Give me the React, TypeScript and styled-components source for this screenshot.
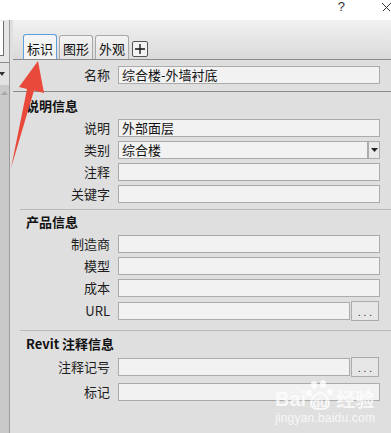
import styled, { createGlobalStyle } from "styled-components";

const GlobalStyle = createGlobalStyle`
  html, body {
    margin: 0;
    padding: 0;
  }
  body {
    width: 391px;
    height: 433px;
    overflow: hidden;
    background: #dfdfdf;
    font-family: "Noto Sans CJK SC", "Noto Sans", sans-serif;
    font-size: 13px;
    color: #1b1b1b;
  }
`;

type Addon = "dropdown" | "browse" | undefined;

interface FieldProps {
  label: string;
  value?: string;
  addon?: Addon;
}

const Field = ({ label, value, addon }: FieldProps) => (
  <StRow $tall={addon === "browse"}>
    <StLabel>{label}</StLabel>
    <StControl>
      <StInput>{value}</StInput>
      {addon === "dropdown" && (
        <StDropButton>
          <svg width="7" height="4" viewBox="0 0 7 4">
            <path d="M0 0h7L3.5 4z" fill="#222" />
          </svg>
        </StDropButton>
      )}
      {addon === "browse" && <StBrowseButton>. . .</StBrowseButton>}
    </StControl>
  </StRow>
);

const App = () => {
  return (
    <StPage>
      <GlobalStyle />
      <StTitleBar>
        <StHelp>?</StHelp>
        <StClose>
          <svg width="12" height="12" viewBox="0 0 12 12">
            <path d="M1 -1L12 10M12 -1L1 10" stroke="#333" strokeWidth="1" fill="none" />
          </svg>
        </StClose>
      </StTitleBar>
      <StBody>
        <StLeftStrip>
          <StStripTop>
            <StStripField />
          </StStripTop>
          <StStripDrop>
            <svg width="6" height="4" viewBox="0 0 6 4">
              <path d="M0 0h6L3 4z" fill="#333" />
            </svg>
          </StStripDrop>
          <StStripScroll>
            <svg width="7" height="4" viewBox="0 0 7 4">
              <path d="M3.5 0L7 4H0z" fill="#a8a8a8" />
            </svg>
          </StStripScroll>
        </StLeftStrip>
        <StMain>
          <StTabBar>
            <StTab $active>标识</StTab>
            <StTab>图形</StTab>
            <StTab>外观</StTab>
            <StAddTab>
              <svg width="10" height="10" viewBox="0 0 10 10">
                <path d="M5 0v10M0 5h10" stroke="#111" strokeWidth="1.3" />
              </svg>
            </StAddTab>
          </StTabBar>

          <StNameBlock>
            <Field label="名称" value="综合楼-外墙衬底" />
          </StNameBlock>
          <StDivider $dark />

          <StSection $top={4} $gap={4}>
            <StHeading>说明信息</StHeading>
            <Field label="说明" value="外部面层" />
            <Field label="类别" value="综合楼" addon="dropdown" />
            <Field label="注释" />
            <Field label="关键字" />
          </StSection>
          <StDivider $top={6} />

          <StSection $top={2} $gap={4}>
            <StHeading>产品信息</StHeading>
            <Field label="制造商" />
            <Field label="模型" />
            <Field label="成本" />
            <Field label="URL" addon="browse" />
          </StSection>
          <StDivider $top={9} />

          <StSection $top={3} $gap={6}>
            <StHeading>Revit 注释信息</StHeading>
            <Field label="注释记号" addon="browse" />
            <Field label="标记" />
          </StSection>
        </StMain>
      </StBody>

      <StArrow width="60" height="180" viewBox="0 0 60 180">
        <polygon
          points="38,61 44,93 34,90.5 11,168 27,89 19,87"
          fill="#e9493a"
        />
      </StArrow>

      <StWatermark>
        <StBrand>
          <span>Bai</span>
          <StPaw>
            <svg width="28" height="30" viewBox="0 0 28 30">
              <ellipse cx="8" cy="5" rx="3" ry="4" fill="currentColor" />
              <ellipse cx="17" cy="4" rx="3" ry="4" fill="currentColor" />
              <ellipse cx="3" cy="13" rx="3" ry="3.5" fill="currentColor" />
              <ellipse cx="24" cy="12" rx="3" ry="3.5" fill="currentColor" />
              <path
                d="M5 24c0-6 5-11 9-11s9 5 9 11c0 4-3 5-9 5s-9-1-9-5z"
                fill="none"
                stroke="currentColor"
                strokeWidth="2"
              />
            </svg>
            <StPawText>du</StPawText>
          </StPaw>
          <StBrandCn>经验</StBrandCn>
        </StBrand>
        <StDomain>jingyan.baidu.com</StDomain>
      </StWatermark>
    </StPage>
  );
};

export default App;

const StPage = styled.div`
  position: relative;
  width: 391px;
  height: 433px;
  overflow: hidden;
  background: #dfdfdf;
`;

const StTitleBar = styled.div`
  height: 20px;
  background: #ffffff;
  display: flex;
  justify-content: flex-end;
  align-items: flex-start;
`;

const StHelp = styled.span`
  font-family: "Liberation Sans", sans-serif;
  font-size: 13px;
  line-height: 13px;
  color: #333;
  margin-top: 0;
  margin-right: 35px;
`;

const StClose = styled.span`
  display: block;
  width: 11px;
  height: 11px;
  overflow: hidden;
`;

const StBody = styled.div`
  display: flex;
  height: 413px;
`;

const StLeftStrip = styled.div`
  width: 9px;
  border-right: 1px solid #9c9c9c;
  background: #c9c9c9;
  display: flex;
  flex-direction: column;
`;

const StStripTop = styled.div`
  height: 42px;
  background: #e6e6e6;
  border-bottom: 1px solid #8c8c8c;
`;

const StStripField = styled.div`
  width: 3px;
  height: 34px;
  margin-top: 1px;
  background: #ffffff;
  border-right: 1px solid #6e6e6e;
  border-bottom: 1px solid #6e6e6e;
`;

const StStripDrop = styled.div`
  height: 22px;
  background: #e2e2e2;
  display: flex;
  align-items: center;
  svg {
    margin-left: -1px;
  }
`;

const StStripScroll = styled.div`
  flex: 1;
  background: #c9c9c9;
  padding-top: 6px;
  padding-left: 1px;
  svg {
    display: block;
  }
`;

const StMain = styled.div`
  flex: 1;
  padding-left: 3px;
  display: flex;
  flex-direction: column;
`;

const StTabBar = styled.div`
  height: 39px;
  border-bottom: 1px solid #8a8a8a;
  background: linear-gradient(#f1f1f1, #dadada);
  display: flex;
  align-items: flex-end;
  padding-left: 10px;
`;

const StTab = styled.div<{ $active?: boolean }>`
  box-sizing: border-box;
  width: 34px;
  height: ${(p) => (p.$active ? "25px" : "24px")};
  margin-right: 2px;
  border: 1px solid ${(p) => (p.$active ? "#5f9fdc" : "#a9a9a9")};
  border-bottom: none;
  border-radius: 3px 3px 0 0;
  background: ${(p) =>
    p.$active ? "#f4f4f4" : "linear-gradient(#f3f3f3, #e2e2e2)"};
  display: flex;
  justify-content: center;
  align-items: center;
  padding-top: 2px;
  font-size: 13px;
  color: #111;
`;

const StAddTab = styled.div`
  box-sizing: border-box;
  width: 16px;
  height: 16px;
  margin-left: 1px;
  margin-bottom: 2px;
  border: 1px solid #555;
  border-radius: 2px;
  background: #f2f2f2;
  display: flex;
  justify-content: center;
  align-items: center;
`;

const StNameBlock = styled.div`
  padding-top: 6px;
`;

const StDivider = styled.div<{ $dark?: boolean; $top?: number }>`
  height: 1px;
  margin-top: ${(p) => (p.$dark ? 7 : p.$top ?? 6)}px;
  margin-left: ${(p) => (p.$dark ? 0 : 7)}px;
  background: ${(p) => (p.$dark ? "#8a8a8a" : "#b9b9b9")};
`;

const StSection = styled.div<{ $top: number; $gap: number }>`
  display: flex;
  flex-direction: column;
  padding-top: ${(p) => p.$top}px;
  gap: 4px;
  & > div + div + div {
    margin-top: ${(p) => p.$gap - 4}px;
  }
`;

const StHeading = styled.div`
  height: 20px;
  margin-bottom: -1px;
  padding-left: 13px;
  font-weight: bold;
  font-size: 13px;
  line-height: 20px;
  color: #111;
`;

const StRow = styled.div<{ $tall?: boolean }>`
  display: grid;
  grid-template-columns: 97px 1fr;
  column-gap: 8px;
  align-items: center;
  height: ${(p) => (p.$tall ? 20 : 18)}px;
  padding-right: 11px;
`;

const StLabel = styled.div`
  text-align: right;
  font-size: 13px;
  line-height: 18px;
  color: #1d1d1d;
`;

const StControl = styled.div`
  display: flex;
  align-items: center;
  gap: 1px;
  height: 100%;
`;

const StInput = styled.div`
  box-sizing: border-box;
  flex: 1;
  height: 18px;
  border: 1px solid #ababab;
  background: #f2f2f2;
  padding-left: 3px;
  font-size: 13px;
  line-height: 16px;
  color: #111;
  white-space: nowrap;
  overflow: hidden;
`;

const StDropButton = styled.div`
  box-sizing: border-box;
  width: 12px;
  height: 18px;
  margin-left: -1px;
  border: 1px solid #ababab;
  background: #e9e9e9;
  display: flex;
  justify-content: center;
  align-items: center;
`;

const StBrowseButton = styled.div`
  box-sizing: border-box;
  width: 28px;
  height: 20px;
  margin-right: 1px;
  border: 1px solid #ababab;
  background: #e6e6e6;
  display: flex;
  justify-content: center;
  align-items: center;
  padding-top: 2px;
  font-family: "Liberation Sans", sans-serif;
  font-size: 10px;
  color: #222;
`;

const StArrow = styled.svg`
  position: absolute;
  left: 0;
  top: 0;
  pointer-events: none;
`;

const StWatermark = styled.div`
  position: absolute;
  left: 275px;
  top: 380px;
  color: rgba(255, 255, 255, 0.75);
  display: flex;
  flex-direction: column;
  align-items: flex-start;
`;

const StBrand = styled.div`
  display: flex;
  align-items: flex-end;
  height: 30px;
  font-family: "Liberation Sans", sans-serif;
  font-weight: bold;
  font-size: 20px;
  line-height: 22px;
`;

const StPaw = styled.span`
  position: relative;
  display: block;
  width: 28px;
  height: 30px;
  svg {
    display: block;
  }
`;

const StPawText = styled.span`
  position: absolute;
  left: 6px;
  bottom: 1px;
  font-size: 13px;
  line-height: 13px;
`;

const StBrandCn = styled.span`
  font-family: "Noto Sans CJK SC", sans-serif;
  font-size: 19px;
  line-height: 22px;
  font-weight: bold;
  margin-left: 2px;
`;

const StDomain = styled.div`
  margin-top: 1px;
  font-family: "Liberation Sans", sans-serif;
  font-size: 12px;
  line-height: 14px;
  letter-spacing: 0.2px;
`;
